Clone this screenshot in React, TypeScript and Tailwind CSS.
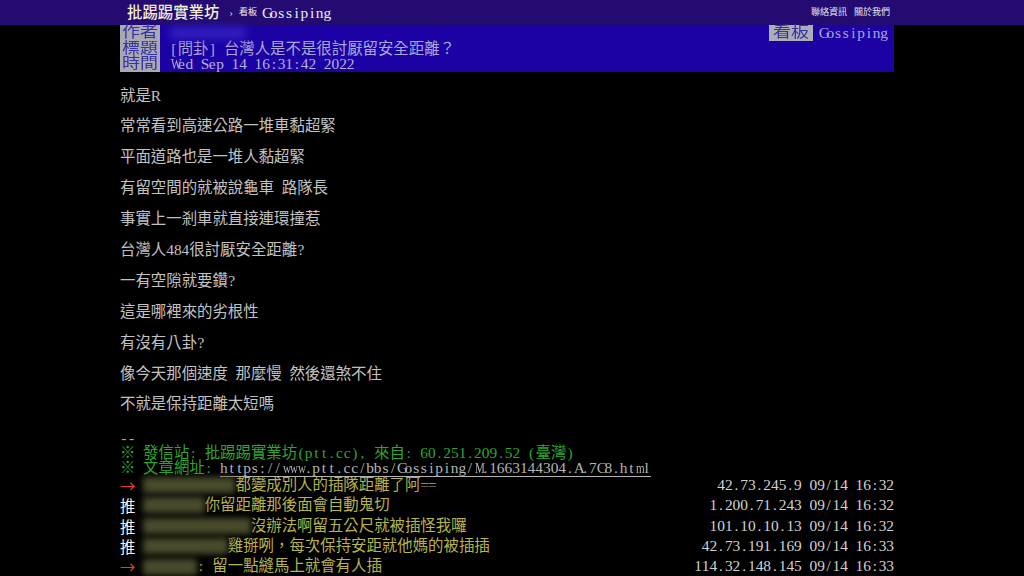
import React from "react";

const WIDE = "WMmw";

function Txt({ s, cls = "" }: { s: string; cls?: string }) {
  return (
    <>
      {Array.from(s).map((ch, i) =>
        ch.charCodeAt(0) < 128 ? (
          <span
            key={i}
            className={
              "inline-block w-[0.5em] text-center whitespace-pre " +
              (WIDE.includes(ch) ? "scale-x-[0.72] " : "") +
              cls
            }
          >
            {ch}
          </span>
        ) : (
          <span key={i} className={cls}>
            {ch}
          </span>
        )
      )}
    </>
  );
}

const body = [
  "就是R",
  "常常看到高速公路一堆車黏超緊",
  "平面道路也是一堆人黏超緊",
  "有留空間的就被說龜車 路隊長",
  "事實上一剎車就直接連環撞惹",
  "台灣人484很討厭安全距離?",
  "一有空隙就要鑽?",
  "這是哪裡來的劣根性",
  "有沒有八卦?",
  "像今天那個速度 那麼慢 然後還煞不住",
  "不就是保持距離太短嗎",
];

type Push = { tag: string; uid: number; content: string; ip: string; colon?: boolean };

const pushes: Push[] = [
  { tag: "→", uid: 12, content: "都變成別人的插隊距離了阿==", ip: "42.73.245.9 09/14 16:32" },
  { tag: "推", uid: 8, content: "你留距離那後面會自動鬼切", ip: "1.200.71.243 09/14 16:32" },
  { tag: "推", uid: 14, content: "沒辦法啊留五公尺就被插怪我囉", ip: "101.10.10.13 09/14 16:32" },
  { tag: "推", uid: 11, content: "雞掰咧，每次保持安距就他媽的被插插", ip: "42.73.191.169 09/14 16:33" },
  { tag: "→", uid: 7, content: "留一點縫馬上就會有人插", ip: "114.32.148.145 09/14 16:33", colon: true },
];

function Label({ t }: { t: string }) {
  return (
    <div className="h-[15.67px] leading-[15.67px] text-center overflow-visible">
      <span className="inline-block scale-x-[1.2]">{t}</span>
    </div>
  );
}

export default function App() {
  return (
    <div className="w-[1024px] h-[576px] bg-black overflow-hidden font-['Liberation_Serif','Noto_Sans_CJK_TC',serif] text-[15.4px]">
      {/* top bar */}
      <div className="h-[25px] bg-[#230b72]">
        <div className="ml-[120px] w-[774px] h-full flex items-center justify-between pl-[7px] pr-[4px]">
          <div className="flex items-center">
            <span className="text-[15.4px] leading-none font-medium text-[#f2eed4]">批踢踢實業坊</span>
            <span className="ml-[10px] text-[11px] leading-none text-[#c8c8d8]">›</span>
            <span className="ml-[6px] text-[9px] leading-none text-[#eeeeee]">看板</span>
            <span className="ml-[5px] text-[15.4px] leading-none text-[#ececf0]">
              <Txt s="Gossiping" />
            </span>
          </div>
          <div className="flex gap-[7px] text-[9px] leading-none text-[#e6e6ee]">
            <span>聯絡資訊</span>
            <span>關於我們</span>
          </div>
        </div>
      </div>

      {/* meta */}
      <div className="ml-[120px] w-[774px] h-[47px] bg-[#1c02a5] flex">
        <div className="w-[40px] bg-[#a9a9b4] flex flex-col text-[#3434a4] text-[15px]">
          <Label t="作者" />
          <Label t="標題" />
          <Label t="時間" />
        </div>
        <div className="flex-1 flex flex-col pl-[10px] pr-[6px] text-[#a8a8d8]">
          <div className="h-[15.67px] flex items-center justify-between">
            <span className="w-[76px] h-[12px] bg-[#3220bc] blur-[4px]" />
            <div className="flex items-center">
              <span className="h-[15.67px] leading-[15.67px] w-[44px] text-center bg-[#adadb6] text-[#3434a4] text-[15px]">
                <span className="inline-block scale-x-[1.2]">看板</span>
              </span>
              <span className="ml-[6px] leading-[15.67px]">
                <Txt s="Gossiping" />
              </span>
            </div>
          </div>
          <div className="h-[15.67px] leading-[15.67px]">
            <Txt s="[問卦] 台灣人是不是很討厭留安全距離？" />
          </div>
          <div className="h-[15.67px] leading-[15.67px] text-[#b4b4d4]">
            <Txt s="Wed Sep 14 16:31:42 2022" />
          </div>
        </div>
      </div>

      {/* body */}
      <div className="ml-[120px] w-[774px] pt-[8.5px] text-[#c2c2c2] leading-[30.9px]">
        {body.map((l, i) => (
          <div key={i} className="h-[30.9px]">
            <Txt s={l} />
          </div>
        ))}
      </div>

      {/* signature */}
      <div className="ml-[120px] w-[774px] mt-[9.5px] leading-[15px]">
        <div className="h-[15px] text-[#a8a8a8]">
          <Txt s="--" />
        </div>
        <div className="h-[15px] text-[#2fa52f]">
          <Txt s="※ 發信站: 批踢踢實業坊(ptt.cc), 來自: 60.251.209.52 (臺灣)" />
        </div>
        <div className="h-[15px] text-[#2fa52f]">
          <Txt s="※ 文章網址: " />
          <span className="text-[#b4b4b4] border-b border-[#b4b4b4]">
            <Txt s="https://www.ptt.cc/bbs/Gossiping/M.1663144304.A.7C8.html" />
          </span>
        </div>
      </div>

      {/* pushes */}
      <div className="ml-[120px] w-[774px] leading-[20.4px]">
        {pushes.map((p, i) => (
          <div key={i} className="h-[20.4px] flex items-center">
            <span
              className={
                "w-[23.1px] font-['Noto_Sans_CJK_TC',sans-serif] " +
                (p.tag === "推" ? "text-[#f4f4f4]" : "text-[#e0403c]")
              }
            >
              {p.tag}
            </span>
            <span
              className="h-[16px] bg-[#4a4a2c] blur-[3px]"
              style={{ width: `${p.uid * 7.7}px` }}
            />
            <span className="text-[#b6b44a]">
              <Txt s={(p.colon ? ": " : "") + p.content} />
            </span>
            <span className="ml-auto text-[#d2d2d2]">
              <Txt s={p.ip} />
            </span>
          </div>
        ))}
      </div>
    </div>
  );
}
